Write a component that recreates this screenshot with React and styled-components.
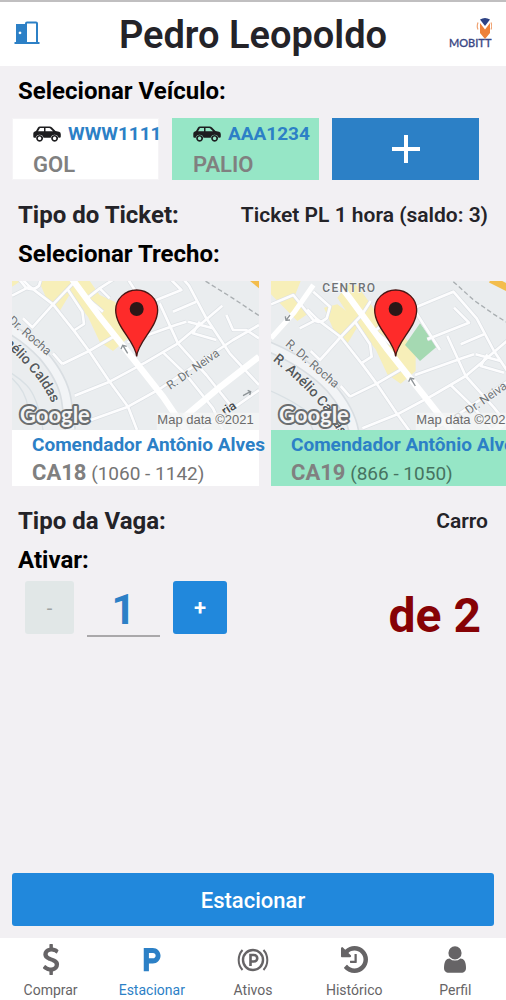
import React, { useState } from 'react';
import styled, { createGlobalStyle, ThemeProvider } from 'styled-components';
import { MdLocalParking } from 'react-icons/md';

const theme = {
  blue: '#2c80c6',
  button: '#2188dc',
  page: '#f2f0f3',
  green: '#96e6c6',
  text: '#242328',
  muted: '#808080',
  tab: '#666466',
  danger: '#860205',
};

const GlobalStyle = createGlobalStyle`
  body {
    margin: 0;
    font-family: Roboto, sans-serif;
    background: ${theme.page};
    color: ${theme.text};
  }

  button,
  input {
    font-family: inherit;
  }
`;

const Screen = styled.div`
  min-height: 100vh;
  display: flex;
  flex-direction: column;
`;

const Header = styled.header`
  display: grid;
  grid-template-columns: 60px 1fr 60px;
  align-items: center;
  height: 66px;
  box-sizing: border-box;
  border-top: 2px solid #c0bfc0;
  background: white;
`;

const ExitButton = styled.button`
  display: flex;
  justify-content: center;
  padding: 0 6px 2px 0;
  border: 0;
  background: none;
`;

const City = styled.h1`
  margin: 0;
  padding-top: 2px;
  font-size: 38px;
  line-height: 44px;
  font-weight: 600;
  text-align: center;
  white-space: nowrap;
`;

const Main = styled.main`
  flex: 1;
  padding-top: 6px;
`;

const SectionTitle = styled.h2`
  margin: 0;
  padding: 0 18px;
  font-size: 24px;
  line-height: 39px;
  font-weight: 700;
  color: black;
`;

const InfoRow = styled.div`
  display: flex;
  justify-content: space-between;
  align-items: center;
  padding: 0 18px;
  font-size: 24px;
  line-height: 39px;
  font-weight: 700;
`;

const InfoValue = styled.span`
  font-size: 21px;
  font-weight: 600;
`;

const Scroller = styled.div`
  display: flex;
  gap: ${({ gap }) => gap}px;
  margin: 7px 0 16px;
  padding-left: 12px;
  overflow: hidden;
`;

const VehicleCard = styled.button`
  flex: 0 0 147px;
  min-width: 0;
  height: 62px;
  box-sizing: border-box;
  padding: 0 0 0 20px;
  border: 1px solid ${({ theme, selected }) => (selected ? theme.green : '#f5f4f6')};
  background: ${({ theme, selected }) => (selected ? theme.green : 'white')};
  text-align: left;
  white-space: nowrap;
`;

const Plate = styled.span`
  display: flex;
  align-items: center;
  gap: 7px;
  font-size: 19px;
  line-height: 30px;
  font-weight: 700;
  color: ${({ theme }) => theme.blue};

  svg {
    flex-shrink: 0;
  }
`;

const Model = styled.span`
  display: block;
  font-size: 22px;
  line-height: 32px;
  font-weight: 600;
  color: ${({ theme }) => theme.muted};
`;

const AddVehicle = styled.button`
  flex: 0 0 147px;
  display: flex;
  align-items: center;
  justify-content: center;
  height: 62px;
  padding: 0;
  border: 0;
  background: ${({ theme }) => theme.blue};
`;

const StretchCard = styled.button`
  flex: 0 0 247px;
  min-width: 0;
  padding: 0;
  border: 0;
  background: ${({ theme, selected }) => (selected ? theme.green : 'white')};
  text-align: left;
  white-space: nowrap;
`;

const MapImage = styled.svg`
  display: block;
  width: 100%;
  height: 149px;
`;

const Street = styled.span`
  display: block;
  padding-left: 20px;
  font-size: 19px;
  line-height: 30px;
  font-weight: 700;
  color: ${({ theme }) => theme.blue};
`;

const Range = styled.span`
  display: block;
  padding-left: 20px;
  font-size: 19px;
  line-height: 25px;
  color: ${({ selected }) => (selected ? '#467361' : '#747474')};
`;

const Code = styled.strong`
  font-size: 22px;
  font-weight: 700;
  color: ${({ theme }) => theme.muted};
`;

const Activation = styled.div`
  display: flex;
  align-items: flex-start;
  justify-content: space-between;
  padding: 1px 25px 0;
`;

const Stepper = styled.div`
  display: flex;
  gap: 13px;
`;

const StepButton = styled.button`
  width: 54px;
  height: 53px;
  padding: 0;
  border: 0;
  border-radius: 3px;
  font-size: 22px;
  font-weight: 600;
  color: white;
  background: ${({ theme }) => theme.button};

  &:disabled {
    width: 49px;
    font-size: 20px;
    font-weight: 400;
    color: #9fa3a3;
    background: #e1e7e7;
  }
`;

const Quantity = styled.input`
  width: 73px;
  height: 56px;
  box-sizing: border-box;
  padding: 2px 0 0;
  border: 0;
  border-bottom: 2px solid #aaa8aa;
  background: none;
  font-size: 42px;
  font-weight: 700;
  text-align: center;
  color: ${({ theme }) => theme.blue};
`;

const Limit = styled.span`
  font-size: 48px;
  line-height: 70px;
  font-weight: 700;
  color: ${({ theme }) => theme.danger};
`;

const Footer = styled.div`
  padding: 12px;
`;

const ParkButton = styled.button`
  width: 100%;
  height: 53px;
  padding: 2px 0 0;
  border: 0;
  border-radius: 3px;
  font-size: 22px;
  font-weight: 500;
  color: white;
  background: ${({ theme }) => theme.button};
`;

const TabBar = styled.nav`
  display: grid;
  grid-template-columns: repeat(5, 1fr);
  height: 62px;
  background: white;
`;

const Tab = styled.a`
  display: flex;
  flex-direction: column;
  align-items: center;
  font-size: 14px;
  line-height: 18px;
  text-decoration: none;
  color: ${({ theme, active }) => (active ? theme.blue : theme.tab)};
`;

const TabIcon = styled.span`
  display: flex;
  align-items: center;
  height: 43px;
`;

const DoorIcon = () => (
  <svg width="26" height="24" viewBox="0 0 26 24" fill={theme.blue} aria-hidden="true">
    <path d="M2 3h9V2.500q0-2 2-2h9q2 0 2 2V21h1.500v2H.5v-2H2zM13 2.500V21h9V2.500zM6 10.500a1.400 1.400 0 1 0 .01 0z" fillRule="evenodd" />
  </svg>
);

const MobittLogo = () => (
  <svg width="46" height="34" viewBox="0 0 46 34" role="img" aria-label="Mobitt">
    <path d="M34 2.500q5-3 10 0L39 9z" fill="#2d4284" />
    <path d="M34 6l5 6.500L44 6v10l-5 6-5-6z" fill="#ee8138" />
    <path d="M32 5.500q-1.500 4 0 7M45 5.500q1.500 4 0 7" fill="none" stroke="#f0a271" strokeWidth="1.200" />
    <text x="3" y="30" fontFamily="Lato, sans-serif" fontSize="11" fontWeight="500" fill="#3a4784" stroke="#3a4784" strokeWidth="0.300">MOBITT</text>
  </svg>
);

const CarIcon = () => (
  <svg width="28" height="16" viewBox="0 0 28 16" fill="#1d1d1f" aria-hidden="true">
    <path
      fillRule="evenodd"
      d="M7 .500h9.500q1.500 0 2.500 1l3.500 3.500 3.500.8q1.800.5 1.800 2.400v2.300q0 1.300-1.300 1.300h-1a4 4 0 0 0-7.800 0h-7.200a4 4 0 0 0-7.800 0H1.500Q.3 11.800.3 10.500V7.500q0-1.500 1.500-2L3 5l2-3.500q.7-1 2-1zM7 2 5 5.300h6V2zM12.500 2v3.300H20L17 2.300Q16.700 2 16.200 2z"
    />
    <path fillRule="evenodd" d="M6.600 8.900a3.400 3.400 0 1 0 .01 0zm0 1.700a1.700 1.700 0 1 1-.01 0zM21.600 8.900a3.400 3.400 0 1 0 .01 0zm0 1.700a1.700 1.700 0 1 1-.01 0z" />
  </svg>
);

const PlusIcon = () => (
  <svg width="30" height="30" viewBox="0 0 30 30" fill="none" stroke="white" strokeWidth="4" aria-hidden="true">
    <path d="M15 1v28M1 15h28" />
  </svg>
);

const DollarIcon = () => (
  <svg width="18" height="31" viewBox="0 0 1024 1792" fill="currentColor" aria-hidden="true">
    <path d="M978 1185q0 153-99.500 263.500t-258.500 136.500v175q0 14-9 23t-23 9h-135q-13 0-22.500-9.500t-9.500-22.500v-175q-66-9-127.500-31t-101.500-44.500-74-48-46.500-37.500-17.500-18q-17-21-2-41l103-135q7-10 23-12 15-2 24 9l2 2q113 99 243 125 37 8 74 8 81 0 142.500-43t61.500-122q0-28-15-53t-33.500-42-58.500-37.500-66-32-80-32.500q-39-16-61.500-25t-61.500-26.500-62.500-31-56.500-35.500-53.500-42.500-43.500-49-35.500-58-21-66.500-8.500-78q0-138 98-242t255-134v-180q0-13 9.500-22.500t22.500-9.500h135q14 0 23 9t9 23v176q57 6 110.500 23t87 33.500 63.500 37.500 39 29 15 14q17 18 5 38l-81 146q-8 15-23 16-14 3-27-7-3-3-14.500-12t-39-26.500-58.500-32-74.500-26-85.500-11.500q-95 0-155 43t-60 111q0 26 8.500 48t29.500 41.500 39.500 33 56 31 60.500 27 70 27.500q53 20 81 31.500t76 35 75.500 42.500 62 50 53 63.500 31.500 76.500 13 94z" />
  </svg>
);

const ActiveIcon = () => (
  <svg width="32" height="24" viewBox="0 0 32 24" fill="none" stroke="currentColor" strokeWidth="2" aria-hidden="true">
    <circle cx="16" cy="12" r="10" strokeWidth="2.400" />
    <path d="M5.500 2a15 15 0 0 0 0 20M26.500 2a15 15 0 0 1 0 20" />
    <path d="M13.500 18V7h3.500a3 3 0 0 1 0 6.500h-3.500" strokeWidth="2.600" />
  </svg>
);

const HistoryIcon = () => (
  <svg width="27" height="27" viewBox="0 -128 1536 1536" fill="currentColor" aria-hidden="true">
    <path d="M1536 640q0 156-61 298t-164 245-245 164-298 61q-172 0-327-72.500t-264-204.500q-7-10-6.500-22.500t8.500-20.500l137-138q10-9 25-9 16 2 23 12 73 95 179 147t225 52q104 0 198.500-40.500t163.500-109.500 109.500-163.500 40.500-198.500-40.500-198.500-109.500-163.500-163.500-109.500-198.500-40.500q-98 0-188 35.500t-160 101.500l137 138q31 30 14 69-17 40-59 40h-448q-26 0-45-19t-19-45v-448q0-42 40-59 39-17 69 14l130 129q107-101 244.500-156.500t284.500-55.500q156 0 298 61t245 164 164 245 61 298zm-640-288v448q0 14-9 23t-23 9h-320q-14 0-23-9t-9-23v-64q0-14 9-23t23-9h224v-352q0-14 9-23t23-9h64q14 0 23 9t9 23z" />
  </svg>
);

const UserIcon = () => (
  <svg width="22" height="27" viewBox="0 0 1280 1536" fill="currentColor" aria-hidden="true">
    <path d="M1280 1271q0 109-62.500 187t-150.500 78h-854q-88 0-150.500-78t-62.500-187q0-85 8.500-160.500t31.500-152 58.500-131 94-89 134.500-34.500q131 128 313 128t313-128q76 0 134.500 34.500t94 89 58.500 131 31.500 152 8.500 160.500zm-256-887q0 159-112.500 271.500t-271.500 112.500-271.500-112.500-112.500-271.500 112.500-271.500 271.500-112.500 271.500 112.500 112.500 271.500z" />
  </svg>
);

const roads = [
  'M-49 -10L18 -38 78 37Q98 50 118 32L128 -3 78 -48',
  'M37 62L90 35 160 88 98 157 70 130M90 35L60 5',
  'M160 88L223 22 250 -20M160 88L225 170 268 228 330 320 385 395 412 465',
  'M225 165L253 147 248 110 203 42',
  'M188 267L268 228 340 186M188 267L160 235',
  'M225 362L330 320 438 262 535 205 600 150 668 92',
  'M255 442L385 395 480 342 600 262 700 195 778 150',
  'M262 70L300 40 350 8M262 70L310 110M300 40L330 70',
  'M378 2L458 127M378 2L498 -48 568 32 620 130 690 235 778 330',
  'M383 202L528 150 560 140M420 95L545 45 500 0M480 85L535 205 620 300 700 400',
  'M520 110L590 80M565 140L640 160M600 140L580 175 650 195M680 120L700 165 740 165 778 190',
  'M490 232L560 300 640 400 670 465M600 465L700 400 778 345',
];

const MapRoads = ({ id }) => (
  <>
    <rect x="-60" y="-90" width="850" height="570" fill="#eaedef" />
    <path d="M-49 -80H40L20 -30 60 20 30 40 -49 -40zM110 0L150 -10 190 20 215 50 180 108 140 70zM190 -80L215 -60 300 60 345 80 385 130 385 190 340 228 300 200 265 125 200 45 150 -30z" fill="#f7efb9" />
    <path d="M353 112L398 47 448 117 398 160z" fill="#a5d9b2" />
    <g fill="none" stroke="#dce0e4" strokeWidth="12" strokeLinejoin="round">
      {roads.map(d => (
        <path key={d} d={d} />
      ))}
    </g>
    <g fill="none" stroke="#fdfdfe" strokeWidth="8" strokeLinejoin="round">
      {roads.map(d => (
        <path key={d} d={d} />
      ))}
    </g>
    <path d="M-49 92L20 15 78 -68" fill="none" stroke="white" strokeWidth="15" />
    <path d="M-60 115Q60 165 130 240 190 310 200 375L212 465" fill="none" stroke="#d9dee2" strokeWidth="34" />
    <path d="M-60 115Q60 165 130 240 190 310 200 375L212 465" fill="none" stroke="#f2f4f6" strokeWidth="24" />
    <path d="M-49 250Q40 290 80 330 115 365 130 465M37 310Q80 350 85 400" fill="none" stroke="#d9e0e4" strokeWidth="4" />
    <path d="M140 -90L188 -28 300 125 411 265 490 365 565 475M555 425L650 345 778 245" fill="none" stroke="white" strokeWidth="19" />
    <path d="M498 -78L560 -22 620 20 700 70 778 122" fill="none" stroke="#a9aeb1" strokeWidth="4" strokeDasharray="14 8" />
    <path d="M610 -85L690 -45 790 35" fill="none" stroke="#f3bd4c" strokeWidth="22" />
    <path d="M384 235L370 212M364 222L369 211 381 214M730 362L752 350M744 346L753 350 750 360M8 22L-4 38M-6 26L-4 38 8 37" fill="none" stroke="#8d9397" strokeWidth="4" />
    <path id={id} d="M-45 158Q40 225 90 285 140 335 175 430" fill="none" />
    <g fontFamily="Roboto, sans-serif" fill="#6f7376" stroke="#f4f6f7" strokeWidth="4" paintOrder="stroke">
      <text fontSize="37" transform="translate(-8 112) rotate(41)">R. Dr. Rocha</text>
      <text fontSize="36" transform="translate(512 345) rotate(-35)">R. Dr. Neiva</text>
      <text fontSize="42" fontWeight="500" fill="#55595c">
        <textPath href={`#${id}`}>R. Anélio Caldas</textPath>
      </text>
      <text fontSize="38" fontWeight="500" fill="#45494c" transform="translate(676 422) rotate(-33)">ria</text>
      <text fontSize="36" fontWeight="500" letterSpacing="4" x="105" y="-46">CENTRO</text>
    </g>
  </>
);

// Both stretches look at the same streets, each from its own origin.
const StretchMap = ({ id, x, y }) => (
  <MapImage viewBox={`${x} ${y} 741 447`} preserveAspectRatio="xMidYMid slice" role="img" aria-label="Mapa do trecho">
    <MapRoads id={id} />
    <g transform={`translate(${x} ${y})`}>
      <rect x="434" y="395" width="307" height="52" fill="#f4f5f6" opacity="0.75" />
      <text x="436" y="429" fontFamily="Liberation Sans, sans-serif" fontSize="39" fill="#6b6b6b">Map data ©2021</text>
      <text x="24" y="425" fontFamily="Lato, sans-serif" fontSize="66" fontWeight="700" fill="#f5f5f5" stroke="#6a6e70" strokeWidth="12" strokeLinejoin="round" paintOrder="stroke">Google</text>
      <path d="M374 226C370 180 311 140 311 87a63 60 0 0 1 126 0C437 140 378 180 374 226z" fill="#fe2b2a" stroke="#4a1513" strokeWidth="4" />
      <circle cx="374" cy="84" r="21" fill="#2b1717" />
    </g>
  </MapImage>
);

const vehicles = [
  { plate: 'WWW1111', model: 'GOL' },
  { plate: 'AAA1234', model: 'PALIO' },
];

const stretches = [
  { street: 'Comendador Antônio Alves', code: 'CA18', range: '(1060 - 1142)', x: 37, y: 18 },
  { street: 'Comendador Antônio Alves', code: 'CA19', range: '(866 - 1050)', x: -49, y: -80 },
];

const tabs = [
  { label: 'Comprar', icon: <DollarIcon /> },
  { label: 'Estacionar', icon: <MdLocalParking size={31} /> },
  { label: 'Ativos', icon: <ActiveIcon /> },
  { label: 'Histórico', icon: <HistoryIcon /> },
  { label: 'Perfil', icon: <UserIcon /> },
];

const MAX = 2;

const App = () => {
  const [vehicle, setVehicle] = useState('AAA1234');
  const [stretch, setStretch] = useState('CA19');
  const [quantity, setQuantity] = useState(1);

  return (
    <ThemeProvider theme={theme}>
      <GlobalStyle />
      <Screen>
        <Header>
          <ExitButton aria-label="Sair">
            <DoorIcon />
          </ExitButton>
          <City>Pedro Leopoldo</City>
          <MobittLogo />
        </Header>

        <Main>
          <SectionTitle>Selecionar Veículo:</SectionTitle>
          <Scroller gap={13}>
            {vehicles.map(({ plate, model }) => (
              <VehicleCard key={plate} selected={plate === vehicle} onClick={() => setVehicle(plate)}>
                <Plate>
                  <CarIcon />
                  {plate}
                </Plate>
                <Model>{model}</Model>
              </VehicleCard>
            ))}
            <AddVehicle aria-label="Adicionar veículo">
              <PlusIcon />
            </AddVehicle>
          </Scroller>

          <InfoRow>
            Tipo do Ticket:
            <InfoValue>Ticket PL 1 hora (saldo: 3)</InfoValue>
          </InfoRow>
          <SectionTitle>Selecionar Trecho:</SectionTitle>
          <Scroller gap={12}>
            {stretches.map(({ street, code, range, x, y }) => (
              <StretchCard key={code} selected={code === stretch} onClick={() => setStretch(code)}>
                <StretchMap id={`street-${code}`} x={x} y={y} />
                <Street>{street}</Street>
                <Range selected={code === stretch}>
                  <Code>{code}</Code> {range}
                </Range>
              </StretchCard>
            ))}
          </Scroller>

          <InfoRow>
            Tipo da Vaga:
            <InfoValue>Carro</InfoValue>
          </InfoRow>
          <SectionTitle>
            <label htmlFor="quantity">Ativar:</label>
          </SectionTitle>
          <Activation>
            <Stepper>
              <StepButton disabled={quantity <= 1} onClick={() => setQuantity(quantity - 1)}>
                -
              </StepButton>
              <Quantity
                id="quantity"
                inputMode="numeric"
                value={quantity}
                onChange={e => setQuantity(Math.min(MAX, Number(e.target.value) || 1))}
              />
              <StepButton onClick={() => setQuantity(Math.min(MAX, quantity + 1))}>+</StepButton>
            </Stepper>
            <Limit>de {MAX}</Limit>
          </Activation>
        </Main>

        <Footer>
          <ParkButton>Estacionar</ParkButton>
        </Footer>
        <TabBar>
          {tabs.map(({ label, icon }) => (
            <Tab key={label} href="#" active={label === 'Estacionar' ? 1 : 0}>
              <TabIcon>{icon}</TabIcon>
              {label}
            </Tab>
          ))}
        </TabBar>
      </Screen>
    </ThemeProvider>
  );
};

export default App;
